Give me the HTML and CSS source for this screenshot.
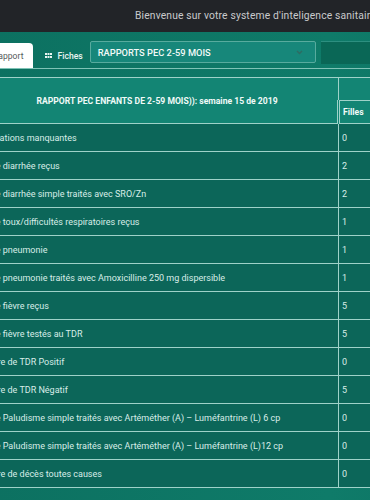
FILE: index.html
```html
<!DOCTYPE html>
<html>
  <head>
    <meta charset="utf-8" />
    <title>Rapports PEC 2-59 mois</title>
    <link rel="stylesheet" href="styles.css">
  </head>
  <body>
    <header class="topbar">
      <p class="welcome">Bienvenue sur votre systeme d'inteligence sanitaire du district</p>
    </header>
    <main class="content">
      <nav class="tabs">
        <a class="tab active">Rapport</a>
        <a class="tab">
          <svg class="grid-icon" width="7" height="5" viewBox="0 0 7 5">
            <rect x="0" y="0" width="2" height="2" />
            <rect x="2.5" y="0" width="2" height="2" />
            <rect x="5" y="0" width="2" height="2" />
            <rect x="0" y="3" width="2" height="2" />
            <rect x="2.5" y="3" width="2" height="2" />
            <rect x="5" y="3" width="2" height="2" />
          </svg>
          Fiches
        </a>
        <div class="select">
          <span>RAPPORTS PEC 2-59 MOIS</span>
          <svg class="caret" width="7" height="5" viewBox="0 0 7 5">
            <path d="M1 1 L3.5 3.5 L6 1" />
          </svg>
        </div>
        <div class="filter"></div>
      </nav>

      <table class="report">
        <thead>
          <tr>
            <th class="title" rowspan="2">RAPPORT PEC ENFANTS DE 2-59 MOIS)): semaine 15 de 2019</th>
            <th class="group" colspan="3">Nombre</th>
          </tr>
          <tr>
            <th class="sub first">Filles</th>
            <th class="sub">Garçons</th>
            <th class="sub">Total</th>
          </tr>
        </thead>
        <tbody>
          <tr><td>Informations manquantes</td><td class="num first">0</td><td class="num">0</td><td class="num">0</td></tr>
          <tr><td>Cas de diarrhée reçus</td><td class="num first">2</td><td class="num">1</td><td class="num">3</td></tr>
          <tr><td>Cas de diarrhée simple traités avec SRO/Zn</td><td class="num first">2</td><td class="num">1</td><td class="num">3</td></tr>
          <tr><td>Cas de toux/difficultés respiratoires reçus</td><td class="num first">1</td><td class="num">0</td><td class="num">1</td></tr>
          <tr><td>Cas de pneumonie</td><td class="num first">1</td><td class="num">0</td><td class="num">1</td></tr>
          <tr><td>Cas de pneumonie traités avec Amoxicilline 250 mg dispersible</td><td class="num first">1</td><td class="num">0</td><td class="num">1</td></tr>
          <tr><td>Cas de fièvre reçus</td><td class="num first">5</td><td class="num">2</td><td class="num">7</td></tr>
          <tr><td>Cas de fièvre testés au TDR</td><td class="num first">5</td><td class="num">2</td><td class="num">7</td></tr>
          <tr><td>Nombre de TDR Positif</td><td class="num first">0</td><td class="num">0</td><td class="num">0</td></tr>
          <tr><td>Nombre de TDR Négatif</td><td class="num first">5</td><td class="num">2</td><td class="num">7</td></tr>
          <tr><td>Cas de Paludisme simple traités avec Artéméther (A) – Luméfantrine (L) 6 cp</td><td class="num first">0</td><td class="num">0</td><td class="num">0</td></tr>
          <tr><td>Cas de Paludisme simple traités avec Artéméther (A) – Luméfantrine (L)12 cp</td><td class="num first">0</td><td class="num">0</td><td class="num">0</td></tr>
          <tr><td>Nombre de décès toutes causes</td><td class="num first">0</td><td class="num">0</td><td class="num">0</td></tr>
        </tbody>
      </table>
    </main>
  </body>
</html>
```

FILE: styles.css
```css
html,
body {
  margin: 0;
  padding: 0;
  height: 100%;
}

body {
  overflow: hidden;
  background-color: #0e7363;
  font-family: Roboto, "Liberation Sans", sans-serif;
  font-size: 9px;
}

.topbar {
  height: 32px;
  background-color: #222428;
  overflow: hidden;
}

.welcome {
  margin: 0;
  padding-left: 135px;
  line-height: 32px;
  white-space: nowrap;
  color: #c9cacc;
  font-size: 10.3px;
  letter-spacing: 0.15px;
}

.content {
  margin-left: -35px;
  width: 520px;
  background: linear-gradient(to right, #0c7060, #0f7b69 70%, #0d7464);
  padding-bottom: 20px;
}

.tabs {
  display: flex;
  align-items: flex-start;
  height: 27px;
  padding-top: 9px;
  border-bottom: 1px solid #7fc3b6;
}

.tab {
  display: flex;
  align-items: center;
  gap: 5px;
  height: 25px;
  margin-top: 2px;
  padding: 0 12px;
  color: #eaf5f2;
  font-weight: 500;
  font-size: 8.6px;
}

.tab.active {
  margin-left: 15px;
  padding: 0 10px 0 13px;
  background-color: #fff;
  border-radius: 4px 4px 0 0;
  color: #55595c;
  font-weight: 400;
}

.grid-icon {
  fill: #eaf5f2;
}

.select {
  display: flex;
  align-items: center;
  justify-content: space-between;
  box-sizing: border-box;
  width: 226px;
  height: 22px;
  margin-left: -5px;
  padding: 0 8px 0 7px;
  background-color: #17877a;
  border: 1px solid #58ab9e;
  border-radius: 2px;
  color: #f3faf8;
  font-weight: 500;
  font-size: 9.3px;
}

.caret {
  fill: none;
  stroke: #2f6b62;
  stroke-width: 1.3;
  margin-right: 4px;
}

.filter {
  flex: 1;
  height: 22px;
  margin-left: 5px;
  background-color: #0a6756;
  border-top: 1px solid #2d8f80;
}

.report {
  margin-top: 8px;
  border-collapse: collapse;
  color: #d8ede8;
}

.report th,
.report td {
  border: 1px solid #9fd2c9;
  padding: 0 8px;
  text-align: left;
  white-space: nowrap;
}

.report thead th {
  background-color: #138574;
  color: #f1faf8;
  font-weight: 700;
  font-size: 8.6px;
  height: 22px;
}

.report th.title {
  width: 344px;
  height: 45px;
  padding-left: 20px;
  text-align: center;
  border-left: none;
}

.report th.group {
  text-align: center;
}

.report th.sub {
  width: 30px;
  padding: 0 3px;
}

.report tbody td {
  height: 27px;
  background-color: #0c6659;
  border-left: none;
}

.report td.num {
  width: 30px;
  padding: 0 3px;
  border-left: 1px solid #9fd2c9;
}

.report .first {
  border-left: 3px double #9fd2c9;
}
```
